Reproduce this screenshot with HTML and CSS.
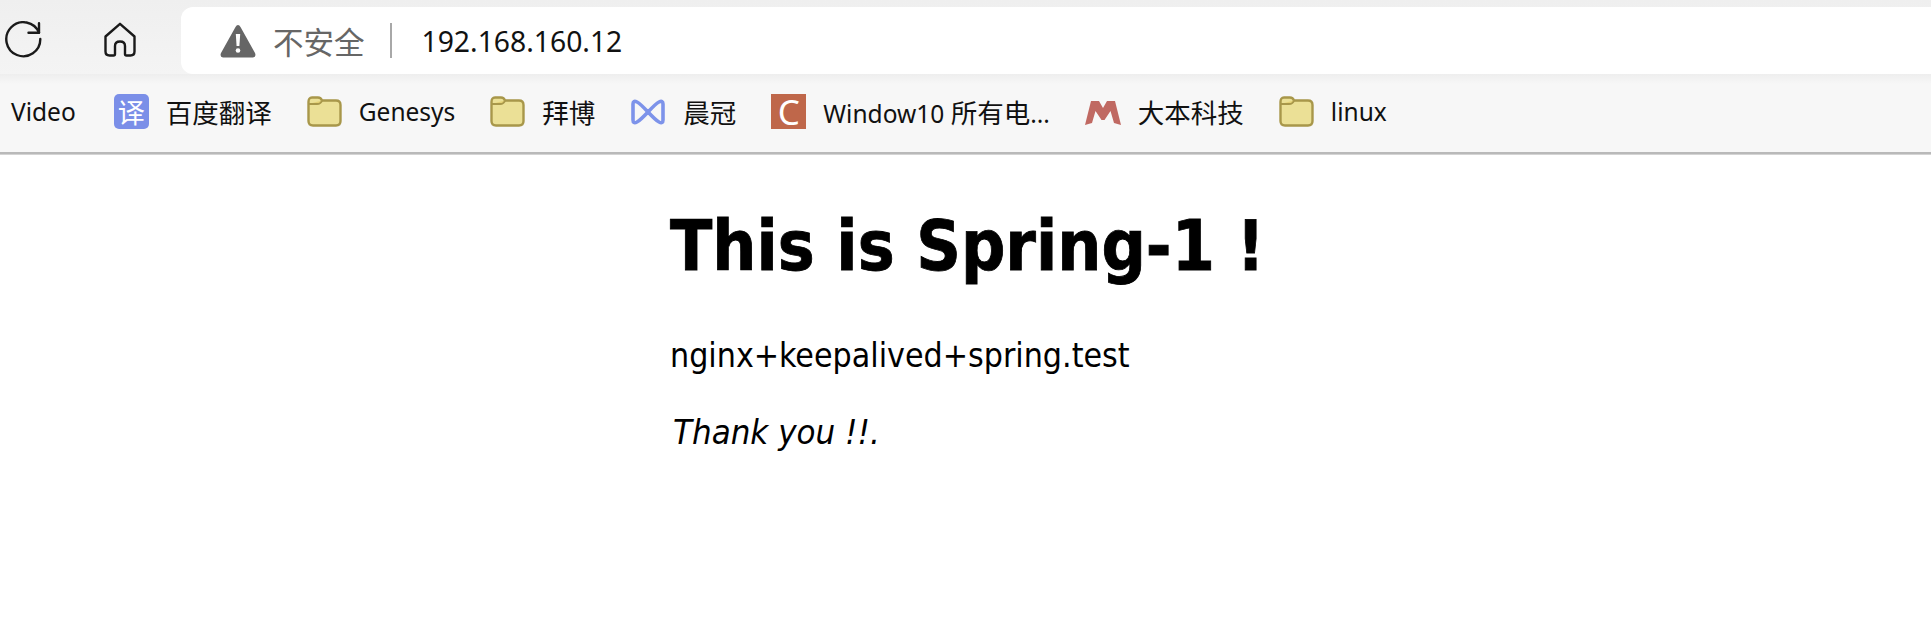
FILE: index.html
```html
<!DOCTYPE html>
<html lang="zh-CN">
  <head>
    <meta charset="UTF-8" />
    <title>Welcome</title>
    <link rel="stylesheet" href="styles.css">
  </head>
  <body>
    <div class="toolbar">
      <svg class="reload-icon" viewBox="0 0 38 38" fill="none" stroke="#1a1a1a" stroke-width="2.4" stroke-linecap="round" stroke-linejoin="round">
        <path d="M34 11.700 A17 17 0 1 0 35.300 18" />
        <path d="M34 2.300 V11.700 H23.500" />
      </svg>
      <svg class="home-icon" viewBox="0 0 34 35" fill="none" stroke="#1a1a1a" stroke-width="2.400" stroke-linejoin="round">
        <path d="M17 1.800 L2.500 14.500 V29.500 Q2.500 33.500 6.500 33.500 H10.500 Q12 33.500 12 32 V24 Q12 19.500 17 19.500 Q22 19.500 22 24 V32 Q22 33.500 23.500 33.500 H27.500 Q31.500 33.500 31.500 29.500 V14.500 Z" />
      </svg>
      <div class="address-bar">
        <svg class="warn-icon" viewBox="0 0 36 34">
          <path fill="#666" d="M18 1 Q19.500 1 20.500 3 L35 29 Q36.500 33 33 33.500 H3 Q-0.500 33 1 29 L15.500 3 Q16.500 1 18 1 Z" />
          <path fill="#fff" d="M15.800 10 H20.200 L19.400 22 H16.600 Z" />
          <circle fill="#fff" cx="18" cy="26.500" r="2.300" />
        </svg>
        <span class="not-secure">不安全</span>
        <span class="divider"></span>
        <span class="url">192.168.160.12</span>
      </div>
    </div>

    <div class="bookmarks">
      <a class="bookmark bookmark-video">Video</a>
      <a class="bookmark"><span class="fav fav-translate">译</span><span class="zh">百度翻译</span></a>
      <a class="bookmark">
        <svg class="folder" viewBox="0 0 35 31"><path fill="#ebe096" stroke="#a8974a" stroke-width="2.400" d="M1.500 6 Q1.500 1.500 5 1.500 H11 Q14 1.500 15 4.500 H29 Q33.500 4.500 33.500 9 V25 Q33.500 29.500 29 29.500 H6 Q1.500 29.500 1.500 25 Z" /><path fill="#e3d075" stroke="#a8974a" stroke-width="1.800" d="M1.500 8 H10 Q14 8 15 4.500" /></svg>
        Genesys
      </a>
      <a class="bookmark">
        <svg class="folder" viewBox="0 0 35 31"><path fill="#ebe096" stroke="#a8974a" stroke-width="2.400" d="M1.500 6 Q1.500 1.500 5 1.500 H11 Q14 1.500 15 4.500 H29 Q33.500 4.500 33.500 9 V25 Q33.500 29.500 29 29.500 H6 Q1.500 29.500 1.500 25 Z" /><path fill="#e3d075" stroke="#a8974a" stroke-width="1.800" d="M1.500 8 H10 Q14 8 15 4.500" /></svg>
        <span class="zh">拜博</span>
      </a>
      <a class="bookmark">
        <svg class="fav-logo" viewBox="0 0 36 28" fill="none" stroke="#7d93ea" stroke-width="3.600" stroke-linejoin="round"><path d="M3 6 Q3 2 7 4 Q10 5.500 18 14 Q26 5.500 29 4 Q33 2 33 6 V22 Q33 26 29 24 Q26 22.500 18 14 Q10 22.500 7 24 Q3 26 3 22 Z" /></svg>
        <span class="zh">晨冠</span>
      </a>
      <a class="bookmark"><span class="fav fav-c">C</span><span>Window10 <span class="zh">所有电</span>...</span></a>
      <a class="bookmark">
        <svg class="fav-logo fav-m" viewBox="0 0 36 28"><path fill="#bb5a52" d="M0 27 L6 3 H14 L18 10 L22 3 H30 L36 27 L29 25 L25.500 13 L19.500 22 H16.500 L10.500 13 L7 25 Z" /></svg>
        <span class="zh">大本科技</span>
      </a>
      <a class="bookmark">
        <svg class="folder" viewBox="0 0 35 31"><path fill="#ebe096" stroke="#a8974a" stroke-width="2.400" d="M1.500 6 Q1.500 1.500 5 1.500 H11 Q14 1.500 15 4.500 H29 Q33.500 4.500 33.500 9 V25 Q33.500 29.500 29 29.500 H6 Q1.500 29.500 1.500 25 Z" /><path fill="#e3d075" stroke="#a8974a" stroke-width="1.800" d="M1.500 8 H10 Q14 8 15 4.500" /></svg>
        linux
      </a>
    </div>

    <div class="content">
      <h1>This is Spring-1 !</h1>
      <p>nginx+keepalived+spring.test</p>
      <p><em>Thank you !!.</em></p>
    </div>
  </body>
</html>
```

FILE: styles.css
```css
body {
  margin: 0;
  background: #fff;
  color: #000;
  font-family: "Noto Sans", "Noto Sans CJK SC", sans-serif;
  overflow: hidden;
}
.toolbar {
  height: 74px;
  box-sizing: border-box;
  padding-top: 7px;
  display: flex;
  align-items: stretch;
  background: linear-gradient(#efefef, #f4f4f4);
}
.reload-icon {
  width: 38px;
  height: 38px;
  margin: 14px 0 0 5px;
}
.home-icon {
  width: 34px;
  height: 35px;
  margin: 15px 0 0 60px;
}
.address-bar {
  flex: 1;
  margin-left: 44px;
  background: #fff;
  border-radius: 12px 0 0 12px;
  display: flex;
  align-items: center;
  padding-left: 39px;
}
.warn-icon {
  width: 36px;
  height: 34px;
}
.not-secure {
  margin-left: 17px;
  font-family: "Noto Sans CJK SC", sans-serif;
  font-size: 30.5px;
  color: #666;
}
.divider {
  width: 2px;
  height: 35px;
  margin-left: 25px;
  background: #a8a8a8;
}
.url {
  margin-left: 30px;
  font-size: 28.3px;
  color: #111;
}
.bookmarks {
  height: 80px;
  box-sizing: border-box;
  padding: 0 0 3px 11px;
  display: flex;
  align-items: center;
  gap: 35px;
  background: linear-gradient(#eeeeee, #f7f7f7 10px);
  border-bottom: 2px solid #b9b9b9;
  box-shadow: 0 1px #d4d4d4;
  font-size: 24.500px;
  color: #111;
}
.bookmark {
  display: flex;
  align-items: center;
  gap: 17px;
  white-space: nowrap;
}
.bookmark-video {
  margin-right: 3px;
}
.zh {
  font-family: "Noto Sans CJK SC", sans-serif;
  font-size: 26.500px;
}
.fav {
  width: 35px;
  height: 35px;
  display: flex;
  align-items: center;
  justify-content: center;
  color: #fff;
  font-size: 27px;
}
.fav-translate {
  background: #7b8fe8;
  border-radius: 5px;
}
.fav-c {
  background: #bf674a;
  font-size: 35px;
}
.fav-logo {
  width: 36px;
  height: 28px;
}
.fav-m {
  opacity: 0.9;
  filter: blur(0.5px);
}
.folder {
  width: 35px;
  height: 31px;
}
.content {
  width: 591px;
  margin: 0 auto;
  padding-top: 1px;
  font-family: "DejaVu Sans", Tahoma, sans-serif;
  font-stretch: condensed;
}
h1 {
  margin: 53px 0 50px;
  font-size: 69px;
  line-height: 76px;
  font-weight: bold;
  white-space: nowrap;
  -webkit-text-stroke: 0.8px #000;
}
p {
  margin: 32px 0 0;
  font-size: 33.600px;
  line-height: 44px;
}
em {
  display: inline-block;
  margin-left: 3px;
  font-size: 34.500px;
}
```
